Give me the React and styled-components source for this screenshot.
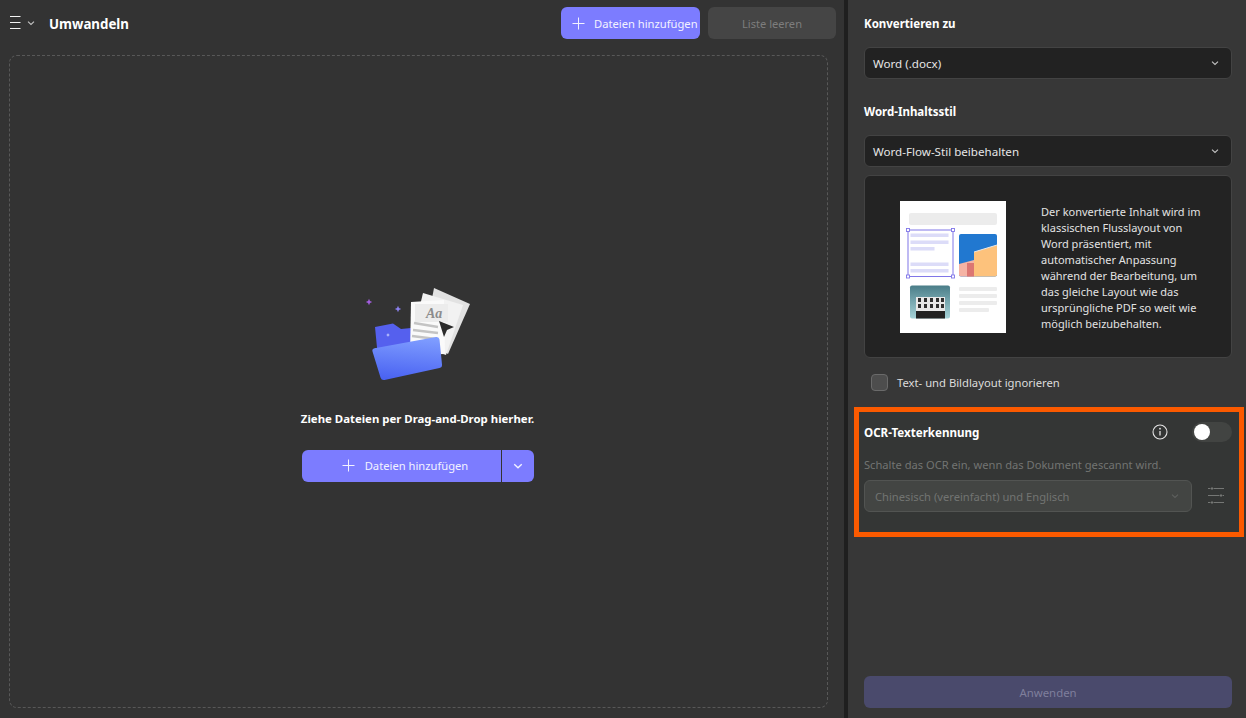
import React from 'react';
import styled, { createGlobalStyle } from 'styled-components';

const GlobalStyle = createGlobalStyle`
  html, body {
    margin: 0;
    height: 100%;
    background: #333333;
  }
  body {
    font-family: "Noto Sans", "Open Sans", sans-serif;
    font-size: 11.2px;
    overflow: hidden;
  }
  * {
    box-sizing: border-box;
  }
`;

const Page = styled.div`
  width: 1246px;
  height: 718px;
  display: flex;
`;

const LeftPanel = styled.main`
  width: 844px;
  display: flex;
  flex-direction: column;
  background: #333333;
`;

const TopBar = styled.header`
  height: 47px;
  padding: 7px 8px 0 10px;
  display: flex;
  align-items: flex-start;
`;

const MenuToggle = styled.div`
  width: 39px;
  height: 32px;
  display: flex;
  align-items: center;
  gap: 6px;
`;

const Title = styled.h1`
  flex: 1;
  margin: 0;
  padding-top: 1px;
  font-size: 13.3px;
  line-height: 32px;
  font-weight: 700;
  color: #ffffff;
`;

const TopButton = styled.button`
  height: 32px;
  width: ${(p) => p.$width}px;
  margin-left: 8px;
  padding: 0 0 0 11px;
  display: flex;
  align-items: center;
  gap: 9px;
  border: 0;
  border-radius: 6px;
  font: inherit;
  white-space: nowrap;
  background: #7c7cff;
  color: #f2f2ff;
`;

const DisabledTopButton = styled(TopButton)`
  justify-content: center;
  padding: 0;
  font-size: 11.1px;
  background: #454545;
  color: #7d7d7d;
`;

const DropZone = styled.section`
  margin: 8px 16px 10px 9px;
  padding: 0 2px 2px 0;
  flex: 1;
  display: flex;
  flex-direction: column;
  align-items: center;
  justify-content: center;
  border: 1px dashed #585858;
  border-radius: 8px;
`;

const DropText = styled.p`
  margin: 20px 0 22px;
  font-size: 11.4px;
  line-height: 18px;
  font-weight: 700;
  color: #ffffff;
`;

const SplitButton = styled.div`
  width: 232px;
  height: 32px;
  display: flex;
  border-radius: 6px;
  overflow: hidden;
  color: #f2f2ff;
  background: #7c7cff;
`;

const SplitMain = styled.div`
  flex: 1;
  display: flex;
  align-items: center;
  justify-content: center;
  gap: 10px;
  padding-left: 8px;
  border-right: 1px solid #333333;
`;

const SplitArrow = styled.div`
  width: 32px;
  display: flex;
  align-items: center;
  justify-content: center;
`;

const Divider = styled.div`
  width: 4px;
  background: #1f1f1f;
`;

const RightPanel = styled.aside`
  width: 398px;
  padding: 0 14px 10px 16px;
  display: flex;
  flex-direction: column;
  background: #373737;
`;

const SectionLabel = styled.h2`
  margin: 0;
  font-size: 11.5px;
  line-height: 18px;
  font-weight: 700;
  color: #ffffff;
  padding-top: ${(p) => p.$top}px;
  padding-bottom: ${(p) => p.$bottom}px;
`;

const Select = styled.div`
  height: 32px;
  padding: 0 12px 0 8px;
  display: flex;
  align-items: center;
  justify-content: space-between;
  border: 1px solid #434343;
  border-radius: 6px;
  font-size: 11.6px;
  background: #222222;
  color: #e6e6e6;
`;

const PreviewCard = styled.div`
  height: 183px;
  margin-top: 8px;
  padding: 25px 20px 0 35px;
  display: flex;
  gap: 35px;
  border: 1px solid #434343;
  border-radius: 6px;
  background: #232323;
`;

const PreviewText = styled.p`
  margin: 3px 0 0;
  width: 165px;
  font-size: 11px;
  line-height: 16px;
  color: #e2e2e2;
`;

const CheckRow = styled.label`
  height: 49px;
  padding-left: 7px;
  display: flex;
  align-items: center;
  gap: 9px;
  font-size: 11.25px;
  color: #dcdcdc;
`;

const CheckBox = styled.span`
  width: 17px;
  height: 17px;
  border: 1px solid #6a6a6a;
  border-radius: 4px;
  background: #4d4d4d;
`;

const OcrBox = styled.section`
  height: 130px;
  margin: 0 -12px 0 -10px;
  padding: 0 7px 0 5px;
  border: 5px solid #fb5a00;
  background: #343635;
`;

const OcrHeader = styled.div`
  height: 45px;
  padding-bottom: 5px;
  display: flex;
  align-items: center;
`;

const OcrTitle = styled.h2`
  flex: 1;
  margin: 0;
  font-size: 11.6px;
  font-weight: 700;
  color: #ffffff;
`;

const Toggle = styled.div`
  width: 40px;
  height: 20px;
  margin-left: 24px;
  padding: 2px;
  border-radius: 10px;
  background: #424442;
`;

const ToggleKnob = styled.div`
  width: 16px;
  height: 16px;
  border-radius: 50%;
  background: #ffffff;
`;

const OcrHint = styled.p`
  margin: 0;
  font-size: 11.15px;
  line-height: 16px;
  color: #727472;
`;

const OcrRow = styled.div`
  margin-top: 7px;
  display: flex;
  align-items: center;
  gap: 16px;
`;

const OcrSelect = styled.div`
  width: 328px;
  height: 32px;
  padding: 0 12px 0 10px;
  display: flex;
  align-items: center;
  justify-content: space-between;
  border: 1px solid #525452;
  border-radius: 6px;
  background: #434543;
  color: #727472;
`;

const Spacer = styled.div`
  flex: 1;
`;

const ApplyButton = styled.button`
  height: 32px;
  border: 0;
  border-radius: 6px;
  font: inherit;
  font-size: 11.4px;
  background: #4a4a6c;
  color: #7f7f9c;
`;

const Chevron = ({ color = '#c4c4c4', size = 8 }) => (
  <svg width={size} height={size} viewBox="0 0 8 8" fill="none">
    <path d="M1 2.6 4 5.4 7 2.6" stroke={color} strokeWidth="1.1" />
  </svg>
);

const Plus = () => (
  <svg width="13" height="13" viewBox="0 0 13 13" fill="none" style={{ flexShrink: 0 }}>
    <path d="M6.5 0.5v12M0.5 6.5h12" stroke="#f2f2ff" strokeWidth="1" />
  </svg>
);

const MenuIcon = () => (
  <svg width="11" height="14" viewBox="0 0 11 14" fill="none">
    <path d="M0 0.5h10.500M0 6.500h10.500M0 12.500h10.500" stroke="#f4f4f4" strokeWidth="1" />
  </svg>
);

const InfoIcon = () => (
  <svg width="16" height="16" viewBox="0 0 16 16" fill="none">
    <circle cx="8" cy="8" r="7" stroke="#e4e4e4" strokeWidth="1.1" />
    <path d="M8 7v4.400" stroke="#e4e4e4" strokeWidth="1.3" />
    <circle cx="8" cy="4.700" r="0.9" fill="#e4e4e4" />
  </svg>
);

const SlidersIcon = () => (
  <svg width="16" height="18" viewBox="0 0 16 18" fill="none" stroke="#757775" strokeWidth="1">
    <path d="M0 1.500h2.500M5.500 1.500h10.500M0 8.500h11.500M14.500 8.500h1.500M0 15.500h2.500M5.500 15.500h10.500" />
    <path d="M4 0.500v2M13 7.500v2M4 14.500v2" strokeWidth="2" />
  </svg>
);

const Sparkle = ({ x, y, r, color }) => (
  <path
    d={`M${x} ${y - r}L${x + r * 0.3} ${y - r * 0.3}L${x + r} ${y}L${x + r * 0.3} ${y + r * 0.3}L${x} ${y + r}L${x - r * 0.3} ${y + r * 0.3}L${x - r} ${y}L${x - r * 0.3} ${y - r * 0.3}Z`}
    fill={color}
  />
);

const FolderArt = () => (
  <svg width="140" height="110" viewBox="0 0 140 110">
    <defs>
      <linearGradient id="folderFront" x1="0.6" y1="0" x2="0.45" y2="1">
        <stop offset="0" stopColor="#7f9dff" />
        <stop offset="1" stopColor="#4a63f2" />
      </linearGradient>
    </defs>
    <Sparkle x={21} y={22} r={3.2} color="#a45ee0" />
    <Sparkle x={50} y={29} r={3.2} color="#8b80f0" />
    <path d="M27 47l18-3.500 8 5.500 10-1 3 22-36 8z" fill="#5560ee" />
    <Sparkle x={40} y={55} r={2} color="#c9d0ff" />
    <path d="M86 8l36 16-22 50-24-14z" fill="#e2e2e2" />
    <path d="M75 13l40 12-17 50-35-12z" fill="#f2f2f2" />
    <path d="M63 22l33-2 1 54-35 1z" fill="#fafafa" />
    <rect x="67" y="24" width="33" height="18" fill="#ececec" />
    <text x="78" y="38" fontFamily="Liberation Serif, serif" fontStyle="italic" fontWeight="700" fontSize="14" fill="#8c8c8c">
      Aa
    </text>
    <path d="M66 43l24 4M65 50l25 3M64 56l24 3" stroke="#c4c4c4" strokeWidth="2.5" />
    <path d="M91 41l15 6-7 3-3 7z" fill="#2b2b2b" />
    <path d="M28 68l60-11q3-.5 3.500 2.500l2.500 25q.3 3-2.500 3.500l-55 12q-3 .5-4-2.500l-8-26q-1-3 3-3.500z" fill="url(#folderFront)" />
  </svg>
);

const DocPreview = () => (
  <svg width="106" height="132" viewBox="0 0 106 132">
    <defs>
      <linearGradient id="building" x1="0" y1="0" x2="0" y2="1">
        <stop offset="0" stopColor="#4a7d88" />
        <stop offset="1" stopColor="#a6d3d8" />
      </linearGradient>
    </defs>
    <rect width="106" height="132" fill="#ffffff" />
    <rect x="9" y="12" width="88" height="12" rx="2" fill="#ececec" />
    <g fill="#dcdcf8">
      <rect x="10.500" y="32.500" width="38" height="3.500" />
      <rect x="10.500" y="39.500" width="38" height="3.500" />
      <rect x="10.500" y="46" width="24" height="3.500" />
      <rect x="10.500" y="61.500" width="38" height="3.500" />
      <rect x="10.500" y="68" width="38" height="3.500" />
    </g>
    <rect x="8" y="29" width="45" height="46.500" fill="none" stroke="#8076e8" strokeWidth="1" />
    <g fill="#ffffff" stroke="#8076e8" strokeWidth="0.9">
      <rect x="6.500" y="27.500" width="3" height="3" />
      <rect x="51.500" y="27.500" width="3" height="3" />
      <rect x="6.500" y="74" width="3" height="3" />
      <rect x="51.500" y="74" width="3" height="3" />
    </g>
    <rect x="59" y="33" width="38" height="42.500" rx="2" fill="#2178d0" />
    <path d="M74 51l23-7v29.500q0 2-2 2H74z" fill="#fdc27c" />
    <path d="M59 63l15-4v16.500H61q-2 0-2-2z" fill="#f5b3a4" />
    <rect x="67" y="62" width="7" height="13.500" fill="#dc7672" />
    <path d="M74 51l23-7" stroke="#e8e8e8" strokeWidth="1" />
    <rect x="10" y="84.500" width="40" height="33" rx="2" fill="url(#building)" />
    <rect x="16" y="96" width="29" height="15" fill="#e8e8e8" />
    <g fill="#2e2e2e">
      <rect x="18" y="97" width="3" height="4" />
      <rect x="24" y="97" width="3" height="4" />
      <rect x="30" y="97" width="3" height="4" />
      <rect x="36" y="97" width="3" height="4" />
      <rect x="41" y="97" width="3" height="4" />
      <rect x="18" y="103" width="3" height="4" />
      <rect x="24" y="103" width="3" height="4" />
      <rect x="30" y="103" width="3" height="4" />
      <rect x="36" y="103" width="3" height="4" />
      <rect x="41" y="103" width="3" height="4" />
    </g>
    <rect x="16" y="110" width="29" height="7.500" fill="#222222" />
    <g fill="#ececec">
      <rect x="59" y="86" width="38" height="4" rx="1" />
      <rect x="59" y="93" width="38" height="4" rx="1" />
      <rect x="59" y="100" width="38" height="4" rx="1" />
      <rect x="59" y="107" width="30" height="4" rx="1" />
    </g>
  </svg>
);

export default function App() {
  return (
    <>
      <GlobalStyle />
      <Page>
        <LeftPanel>
          <TopBar>
            <MenuToggle>
              <MenuIcon />
              <Chevron />
            </MenuToggle>
            <Title>Umwandeln</Title>
            <TopButton $width={139}>
              <Plus />
              Dateien hinzufügen
            </TopButton>
            <DisabledTopButton $width={128}>Liste leeren</DisabledTopButton>
          </TopBar>
          <DropZone>
            <FolderArt />
            <DropText>Ziehe Dateien per Drag-and-Drop hierher.</DropText>
            <SplitButton>
              <SplitMain>
                <Plus />
                Dateien hinzufügen
              </SplitMain>
              <SplitArrow>
                <Chevron color="#f2f2ff" size={10} />
              </SplitArrow>
            </SplitButton>
          </DropZone>
        </LeftPanel>
        <Divider />
        <RightPanel>
          <SectionLabel $top={15} $bottom={14}>
            Konvertieren zu
          </SectionLabel>
          <Select>
            Word (.docx)
            <Chevron />
          </Select>
          <SectionLabel $top={24} $bottom={14}>
            Word-Inhaltsstil
          </SectionLabel>
          <Select>
            Word-Flow-Stil beibehalten
            <Chevron />
          </Select>
          <PreviewCard>
            <DocPreview />
            <PreviewText>
              Der konvertierte Inhalt wird im klassischen Flusslayout von Word präsentiert, mit automatischer
              Anpassung während der Bearbeitung, um das gleiche Layout wie das ursprüngliche PDF so weit wie möglich
              beizubehalten.
            </PreviewText>
          </PreviewCard>
          <CheckRow>
            <CheckBox />
            Text- und Bildlayout ignorieren
          </CheckRow>
          <OcrBox>
            <OcrHeader>
              <OcrTitle>OCR-Texterkennung</OcrTitle>
              <InfoIcon />
              <Toggle>
                <ToggleKnob />
              </Toggle>
            </OcrHeader>
            <OcrHint>Schalte das OCR ein, wenn das Dokument gescannt wird.</OcrHint>
            <OcrRow>
              <OcrSelect>
                Chinesisch (vereinfacht) und Englisch
                <Chevron color="#5e605e" />
              </OcrSelect>
              <SlidersIcon />
            </OcrRow>
          </OcrBox>
          <Spacer />
          <ApplyButton>Anwenden</ApplyButton>
        </RightPanel>
      </Page>
    </>
  );
}
